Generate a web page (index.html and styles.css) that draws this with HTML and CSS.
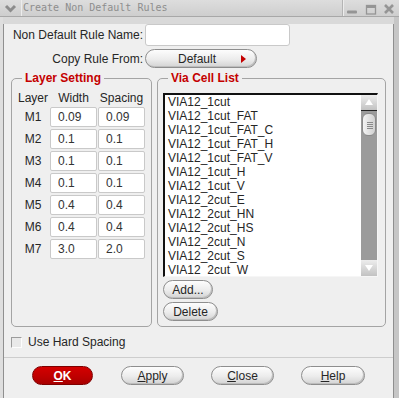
FILE: index.html
```html
<!DOCTYPE html>
<html lang="en">
<head>
  <meta charset="UTF-8">
  <title>Create Non Default Rules</title>
  <link rel="stylesheet" href="styles.css">
</head>
<body>
  <div class="window">
    <div class="titlebar">
      <span class="sys-menu">
        <svg width="22" height="16" viewBox="0 0 22 16"><polyline points="6,6 10.5,10.5 15,6" fill="none" stroke="#8c8c8c" stroke-width="3"/></svg>
      </span>
      <span class="title">Create Non Default Rules</span>
      <svg class="win-btns" width="57" height="16" viewBox="0 0 57 16">
        <line x1="0.5" y1="0" x2="0.5" y2="16" stroke="#b4b4b4"/>
        <line x1="1.5" y1="0" x2="1.5" y2="16" stroke="#ececec"/>
        <rect x="5" y="10.5" width="10" height="3" rx="1" fill="#959595"/>
        <rect x="24.5" y="5.5" width="9" height="8.5" fill="none" stroke="#959595" stroke-width="1.3"/>
        <rect x="24" y="5" width="10" height="3" fill="#959595"/>
        <path d="M43 5 L51 13 M51 5 L43 13" stroke="#959595" stroke-width="2.6"/>
      </svg>
    </div>

    <div class="client">
      <div class="form-grid">
        <label class="form-label">Non Default Rule Name:</label>
        <input class="name-field" type="text">
        <label class="form-label">Copy Rule From:</label>
        <button class="pill-btn copy-btn"><span>Default</span><span class="red-arrow"></span></button>
      </div>

      <div class="groups">
        <fieldset class="group layer-group">
          <legend>Layer Setting</legend>
          <div class="layer-grid">
            <span class="col-head">Layer</span>
            <span class="col-head">Width</span>
            <span class="col-head">Spacing</span>

            <span class="layer-name">M1</span>
            <input class="cell" type="text" value="0.09">
            <input class="cell" type="text" value="0.09">

            <span class="layer-name">M2</span>
            <input class="cell" type="text" value="0.1">
            <input class="cell" type="text" value="0.1">

            <span class="layer-name">M3</span>
            <input class="cell" type="text" value="0.1">
            <input class="cell" type="text" value="0.1">

            <span class="layer-name">M4</span>
            <input class="cell" type="text" value="0.1">
            <input class="cell" type="text" value="0.1">

            <span class="layer-name">M5</span>
            <input class="cell" type="text" value="0.4">
            <input class="cell" type="text" value="0.4">

            <span class="layer-name">M6</span>
            <input class="cell" type="text" value="0.4">
            <input class="cell" type="text" value="0.4">

            <span class="layer-name">M7</span>
            <input class="cell" type="text" value="3.0">
            <input class="cell" type="text" value="2.0">
          </div>
        </fieldset>

        <fieldset class="group via-group">
          <legend>Via Cell List</legend>
          <div class="listbox">
            <ul class="list-items">
              <li>VIA12_1cut</li>
              <li>VIA12_1cut_FAT</li>
              <li>VIA12_1cut_FAT_C</li>
              <li>VIA12_1cut_FAT_H</li>
              <li>VIA12_1cut_FAT_V</li>
              <li>VIA12_1cut_H</li>
              <li>VIA12_1cut_V</li>
              <li>VIA12_2cut_E</li>
              <li>VIA12_2cut_HN</li>
              <li>VIA12_2cut_HS</li>
              <li>VIA12_2cut_N</li>
              <li>VIA12_2cut_S</li>
              <li>VIA12_2cut_W</li>
            </ul>
            <div class="scrollbar">
              <div class="scroll-btn up">
                <svg width="16" height="15" viewBox="0 0 16 15"><polygon points="4,10 8,4 12,10" fill="#fff"/></svg>
              </div>
              <div class="scroll-track">
                <div class="scroll-thumb">
                  <svg width="14" height="23" viewBox="0 0 14 23">
                    <path d="M4 8.5 H10 M4 10.5 H10 M4 12.5 H10 M4 14.5 H10" stroke="#8a8a8a"/>
                  </svg>
                </div>
              </div>
              <div class="scroll-btn down">
                <svg width="16" height="15" viewBox="0 0 16 15"><polygon points="4,5 12,5 8,11" fill="#fff"/></svg>
              </div>
            </div>
          </div>
          <button class="pill-btn small-btn add-btn">Add...</button>
          <button class="pill-btn small-btn delete-btn">Delete</button>
        </fieldset>
      </div>

      <label class="check-row"><span class="checkbox"></span>Use Hard Spacing</label>

      <div class="button-bar">
        <button class="pill-btn ok-btn"><u>O</u>K</button>
        <button class="pill-btn bar-btn apply-btn"><u>A</u>pply</button>
        <button class="pill-btn bar-btn"><u>C</u>lose</button>
        <button class="pill-btn bar-btn help-btn"><u>H</u>elp</button>
      </div>
    </div>
    <div class="frame-bottom"></div>
  </div>
</body>
</html>
```

FILE: styles.css
```css
* {
  box-sizing: border-box;
}
body {
  margin: 0;
  font-family: "Liberation Sans", Arial, sans-serif;
  font-size: 12px;
  color: #262626;
  background: #d4d4d4;
}
.window {
  width: 399px;
  height: 398px;
  background: linear-gradient(90deg, #dedede 0, #dedede 3px, #d9d9d9 3px, #d9d9d9 394px, #c6c6c6 394px);
  overflow: hidden;
}

/* title bar */
.titlebar {
  height: 17px;
  display: flex;
  align-items: flex-start;
  background: linear-gradient(#dddddd, #cecece);
  border-bottom: 1px solid #a8a8a8;
}
.sys-menu {
  width: 22px;
  height: 16px;
  border-right: 1px solid #ececec;
}
.sys-menu svg {
  display: block;
}
.title {
  flex: 1;
  margin-left: 1px;
  font-family: "DejaVu Sans Mono", "Liberation Mono", monospace;
  font-size: 10px;
  line-height: 16px;
  color: #8e8e8e;
}
.win-btns {
  display: block;
}

/* client area */
.client {
  width: 391px;
  height: 377px;
  margin-left: 3px;
  background: #efefef;
  border: 1px solid #8f8f8f;
  border-top: none;
}
.frame-bottom {
  height: 4px;
  border-top: 1px solid #f4f4f4;
  background: linear-gradient(90deg, #a6a6a6 0, #a6a6a6 20px, #d2d2d2 20px, #d2d2d2 378px, #a6a6a6 378px);
  border-bottom: 1px solid #5a5a5a;
}
.form-grid {
  display: grid;
  grid-template-columns: 139px 145px;
  grid-template-rows: 22px 19px;
  column-gap: 2px;
  row-gap: 3px;
  align-items: center;
  margin-top: 7px;
}
.form-label {
  text-align: right;
  white-space: nowrap;
}
.name-field {
  height: 22px;
  width: 145px;
  border: 1px solid #c9c9c9;
  border-radius: 3px;
  background: #fff;
  outline: none;
}

.pill-btn {
  font: inherit;
  color: #262626;
  height: 19px;
  padding: 0;
  border: 1px solid #8e8e8e;
  border-radius: 10px;
  background: linear-gradient(#fdfdfd, #ececec 55%, #d3d3d3);
  box-shadow: inset -1px -1px 0 #bdbdbd;
}
.copy-btn {
  width: 112px;
  display: flex;
  align-items: center;
  justify-content: space-between;
  padding: 0 10px 0 32px;
}
.red-arrow {
  width: 0;
  height: 0;
  border-top: 4px solid transparent;
  border-bottom: 4px solid transparent;
  border-left: 5px solid #c40000;
}

/* group boxes */
.groups {
  display: flex;
  gap: 5px;
  height: 256px;
  margin: 3px 0 0 7px;
}
.group {
  margin: 0;
  min-width: 0;
  padding: 0 5px;
  border: 1px solid #a4a4a4;
  border-radius: 5px;
}
.group legend {
  margin-left: 5px;
  padding: 0 3px;
  color: #c40000;
  font-weight: bold;
  line-height: 14px;
}
.layer-group {
  width: 141px;
}
.via-group {
  width: 229px;
}

.layer-grid {
  display: grid;
  grid-template-columns: 32px 47px 47px;
  grid-template-rows: 15px repeat(7, 20px);
  column-gap: 1px;
  row-gap: 2px;
  margin-top: 5px;
}
.col-head {
  text-align: center;
  align-self: end;
  line-height: 14px;
  white-space: nowrap;
}
.layer-name {
  text-align: center;
  align-self: center;
}
.cell {
  font: inherit;
  color: #333;
  width: 47px;
  height: 20px;
  padding: 0 0 0 7px;
  border: 1px solid #c9c9c9;
  border-radius: 2px;
  background: #fff;
  outline: none;
}

/* via list */
.listbox {
  display: flex;
  width: 215px;
  height: 184px;
  margin-top: 8px;
  background: #fff;
  border: 2px solid;
  border-color: #111 #f6f6f6 #f6f6f6 #111;
  border-right-width: 1px;
  border-bottom-width: 1px;
}
.list-items {
  flex: 1;
  margin: 0;
  padding: 0 0 0 3px;
  list-style: none;
  line-height: 14px;
  overflow: hidden;
}
.scrollbar {
  width: 16px;
  display: flex;
  flex-direction: column;
  background: #9b9b9b;
}
.scroll-btn {
  height: 16px;
  background: linear-gradient(#ededed, #c2c2c2);
}
.scroll-btn svg {
  display: block;
}
.scroll-btn.up {
  border-bottom: 1px solid #222;
}
.scroll-track {
  flex: 1;
  padding: 2px 1px 0;
}
.scroll-thumb {
  height: 23px;
  border: 1px solid #8a8a8a;
  border-radius: 6px;
  background: linear-gradient(90deg, #f3f3f3, #d0d0d0);
}
.scroll-thumb svg {
  display: block;
}
.small-btn {
  display: block;
  margin-top: 3px;
}
.add-btn {
  width: 50px;
}
.delete-btn {
  width: 55px;
}

/* bottom */
.check-row {
  display: flex;
  align-items: center;
  gap: 6px;
  height: 14px;
  margin: 8px 0 0 7px;
}
.checkbox {
  width: 11px;
  height: 11px;
  border: 1px solid;
  border-color: #9c9c9c #fdfdfd #fdfdfd #9c9c9c;
  background: #e9e9e9;
}
.button-bar {
  display: flex;
  gap: 27px;
  margin-top: 8px;
  padding: 8px 0 0 28px;
  border-top: 1px solid #cdcdcd;
}
.ok-btn {
  width: 61px;
  margin-right: 1px;
  color: #fff;
  font-weight: bold;
  border-color: #7e0000;
  background: linear-gradient(#d40000, #bd0000 60%, #a80000);
  box-shadow: none;
}
.bar-btn {
  width: 63px;
}
.help-btn {
  width: 64px;
}
```
